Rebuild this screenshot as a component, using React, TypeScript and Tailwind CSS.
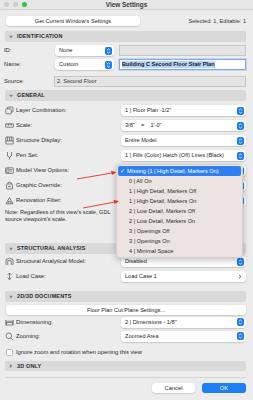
import React from "react";

const Stepper = () => (
  <div className="w-[7px] h-[8px] rounded-[2px] bg-[#1b7cf4] flex items-center justify-center shrink-0">
    <svg width="5" height="6" viewBox="0 0 5 6" fill="none">
      <path d="M1 2.2 L2.5 0.9 L4 2.2" stroke="white" strokeWidth="0.8" />
      <path d="M1 3.8 L2.5 5.1 L4 3.8" stroke="white" strokeWidth="0.8" />
    </svg>
  </div>
);

const Popup = ({ text, className = "", chevron = false }: { text: string; className?: string; chevron?: boolean }) => (
  <div
    className={`h-[11px] bg-white rounded-[3px] shadow-[0_0.5px_1.2px_rgba(0,0,0,0.28)] flex items-center justify-between pl-[4px] pr-[2px] ${className}`}
  >
    <span className="text-[5.6px] text-[#262626] whitespace-pre">{text}</span>
    {chevron ? (
      <svg width="4" height="5" viewBox="0 0 4 5" className="mr-[2px]">
        <path d="M1 0.7 L3 2.5 L1 4.3" stroke="#333" strokeWidth="0.8" fill="none" />
      </svg>
    ) : (
      <Stepper />
    )}
  </div>
);

const Header = ({ title, open = true, className = "" }: { title: string; open?: boolean; className?: string }) => (
  <div className={`h-[11px] bg-[#d9d9d9] rounded-[2px] flex items-center pl-[4px] gap-[4px] ${className}`}>
    <svg width="4" height="4" viewBox="0 0 4 4">
      {open ? <path d="M0 0.8 L4 0.8 L2 3.4 Z" fill="#8a8a8a" /> : <path d="M0.8 0 L3.4 2 L0.8 4 Z" fill="#8a8a8a" />}
    </svg>
    <span className="text-[5.4px] font-bold text-[#2a2a2a] tracking-[0.2px]">{title}</span>
  </div>
);

const Icon = ({ children }: { children: React.ReactNode }) => (
  <svg width="9" height="9" viewBox="0 0 9 9" fill="none" stroke="#555" strokeWidth="0.7" className="shrink-0">
    {children}
  </svg>
);

const Row = ({ icon, label, children, h = "h-[15px]" }: { icon: React.ReactNode; label: string; children?: React.ReactNode; h?: string }) => (
  <div className={`${h} flex items-center`}>
    <div className="w-[116px] flex items-center gap-[2px] shrink-0">
      {icon}
      <span className="text-[5.8px] text-[#2b2b2b] whitespace-nowrap">{label}</span>
    </div>
    <div className="flex-1">{children}</div>
  </div>
);

const items = [
  "0 | All On",
  "1 | High Detail, Markers Off",
  "1 | High Detail, Markers On",
  "2 | Low Detail, Markers Off",
  "2 | Low Detail, Markers On",
  "3 | Openings Off",
  "3 | Openings On",
  "4 | Minimal Space",
];

export default function App() {
  return (
    <div className="w-[253px] h-[400px] bg-[#ececec] relative overflow-hidden font-['Liberation_Sans',Arial,sans-serif]">
      {/* title bar */}
      <div className="h-[10px] bg-[#e6e6e6] border-b border-[#d2d2d2] relative flex items-center">
        <div className="flex items-center gap-[4px] pl-[4px]">
          <div className="w-[5px] h-[5px] rounded-full bg-[#cdcdcd]" />
          <div className="w-[5px] h-[5px] rounded-full bg-[#cdcdcd]" />
          <div className="w-[5px] h-[5px] rounded-full bg-[#2bc840]" />
        </div>
        <div className="absolute inset-0 flex items-center justify-center">
          <span className="text-[6.4px] font-bold text-[#3a3a3a]">View Settings</span>
        </div>
      </div>

      <div className="pl-[5px] pr-[7px] flex flex-col">
        {/* top row */}
        <div className="mt-[6px] h-[10px] flex items-center justify-between">
          <div className="ml-[1px] w-[134px] h-[10px] bg-white rounded-[3px] shadow-[0_0.5px_1.2px_rgba(0,0,0,0.25)] flex items-center justify-center">
            <span className="text-[5.6px] text-[#262626]">Get Current Window's Settings</span>
          </div>
          <span className="text-[5.6px] text-[#333]">Selected: 1, Editable: 1</span>
        </div>

        <Header title="IDENTIFICATION" className="mt-[5px]" />

        {/* ID */}
        <div className="mt-[3px] h-[11px] flex items-center">
          <span className="w-[51px] -ml-[1px] text-[5.8px] text-[#2b2b2b]">ID:</span>
          <Popup text="None" className="w-[59px]" />
          <div className="ml-[5px] flex-1 h-[11px] bg-[#e4e4e4] border border-[#c6c6c6]" />
        </div>
        {/* Name */}
        <div className="mt-[3px] h-[11px] flex items-center">
          <span className="w-[51px] -ml-[1px] text-[5.8px] text-[#2b2b2b]">Name:</span>
          <Popup text="Custom" className="w-[59px]" />
          <div className="ml-[5px] flex-1 h-[11px] bg-white border border-[#7fa9ec] shadow-[0_0_0_0.6px_#a9c6f3] flex items-center pl-[2px]">
            <span className="text-[5.6px] font-bold text-[#1a1a1a] bg-[#b4d4fb] leading-[7px] whitespace-nowrap">Building C Second Floor Stair Plan</span>
          </div>
        </div>
        {/* Source */}
        <div className="mt-[6px] h-[11px] flex items-center">
          <span className="w-[50px] -ml-[1px] text-[5.8px] text-[#2b2b2b]">Source:</span>
          <div className="flex-1 h-[11px] bg-[#e4e4e4] border border-[#c6c6c6] flex items-center pl-[2px]">
            <span className="text-[5.6px] text-[#333]">2. Second Floor</span>
          </div>
        </div>

        <Header title="GENERAL" className="mt-[3px]" />

        <div className="mt-[2px] flex flex-col">
          <Row
            label="Layer Combination:"
            icon={
              <Icon>
                <rect x="2.5" y="1" width="5.5" height="5" rx="0.6" />
                <rect x="0.8" y="2.8" width="5.5" height="5" rx="0.6" fill="#ececec" />
              </Icon>
            }
          >
            <Popup text={'1 | Floor Plan -1/2"'} />
          </Row>
          <Row
            label="Scale:"
            icon={
              <Icon>
                <rect x="0.5" y="2.8" width="8" height="3.4" rx="0.4" />
                <path d="M2 2.8 V4.2 M3.5 2.8 V4.6 M5 2.8 V4.2 M6.5 2.8 V4.6" />
              </Icon>
            }
          >
            <Popup text={'3/8"    =    1\'-0"'} />
          </Row>
          <Row
            label="Structure Display:"
            icon={
              <Icon>
                <rect x="0.8" y="1" width="7.4" height="7" rx="0.4" />
                <path d="M0.8 5 H8.2 M2.6 1 V5 M4.5 1 V5 M6.4 1 V5" />
              </Icon>
            }
          >
            <Popup text="Entire Model" />
          </Row>
          <Row
            label="Pen Set:"
            icon={
              <Icon>
                <path d="M2.5 1 V5 Q4.5 7.5 6.5 5 V1 M4.5 6.3 V8.5" />
              </Icon>
            }
          >
            <Popup text="1 | Fills (Color) Hatch (Off) Lines (Black)" />
          </Row>
          <Row
            label="Model View Options:"
            icon={
              <Icon>
                <rect x="0.6" y="1.8" width="7.8" height="5.6" rx="0.5" />
                <rect x="1.8" y="3" width="2.2" height="3.2" />
                <path d="M5 3.5 H7.2 M5 5 H7.2" />
              </Icon>
            }
          >
            <Popup text="" />
          </Row>
          <Row
            label="Graphic Override:"
            icon={
              <Icon>
                <rect x="1.5" y="3" width="6" height="5" rx="0.5" />
                <path d="M2.8 3 V1.8 Q4.5 0.4 6.2 1.8 V3" />
                <path d="M3 5.5 H6" />
              </Icon>
            }
          >
            <Popup text="" />
          </Row>
          <Row
            label="Renovation Filter:"
            icon={
              <Icon>
                <path d="M1 7.8 L4.5 1.5 L8 7.8 Z" />
                <path d="M3.2 7.8 V5.5 H5.8 V7.8" />
              </Icon>
            }
          >
            <Popup text="" />
          </Row>
        </div>

        <div className="mt-[1px] w-[110px] overflow-hidden text-[5.6px] leading-[7px] text-[#2b2b2b] whitespace-nowrap">
          <div>Note: Regardless of this view's scale, GDL</div>
          <div>source viewpoint's scale.</div>
        </div>

        <Header title="STRUCTURAL ANALYSIS" className="mt-[20px]" />
        <div className="flex flex-col">
          <Row
            label="Structural Analytical Model:"
            icon={
              <Icon>
                <path d="M1 8 V2.5 L4.5 1 L8 2.5 V8 M2.8 8 V3.5 H6.2 V8" />
              </Icon>
            }
          >
            <Popup text="Disabled" />
          </Row>
          <Row
            label="Load Case:"
            icon={
              <Icon>
                <path d="M4.5 1 V7 M2.8 5.5 L4.5 7.8 L6.2 5.5 M2.5 2.5 Q4.5 0.5 6.5 2.5" />
              </Icon>
            }
          >
            <Popup text="Load Case 1" chevron />
          </Row>
        </div>

        <Header title="2D/3D DOCUMENTS" className="mt-[7px]" />
        <div className="mt-[3px] ml-[1px] h-[10px] bg-white rounded-[3px] shadow-[0_0.5px_1.2px_rgba(0,0,0,0.25)] flex items-center justify-center">
          <span className="text-[5.6px] text-[#262626]">Floor Plan Cut Plane Settings...</span>
        </div>
        <div className="flex flex-col">
          <Row
            h="h-[14px]"
            label="Dimensioning:"
            icon={
              <Icon>
                <path d="M0.8 2 V7.5 M8.2 2 V7.5 M0.8 3.2 H8.2" />
                <rect x="1.6" y="4.4" width="5.8" height="2.6" />
              </Icon>
            }
          >
            <Popup text={'2 | Dimensions - 1/8"'} />
          </Row>
          <Row
            h="h-[14px]"
            label="Zooming:"
            icon={
              <Icon>
                <circle cx="3.8" cy="3.8" r="2.8" />
                <path d="M5.8 5.8 L8.2 8.2" />
              </Icon>
            }
          >
            <Popup text="Zoomed Area" />
          </Row>
        </div>

        <div className="mt-[4px] h-[10px] flex items-center gap-[3px]">
          <div className="ml-[1px] w-[7px] h-[7px] bg-white rounded-[1.5px] border border-[#bdbdbd]" />
          <span className="text-[5.8px] text-[#2b2b2b]">Ignore zoom and rotation when opening this view</span>
        </div>

        <Header title="3D ONLY" open={false} className="mt-[4px] !h-[10px]" />

        <div className="mt-[6px] h-px bg-[#d4d4d4]" />

        <div className="mt-[5px] h-[10px] flex justify-end gap-[7px]">
          <div className="w-[43px] h-[10px] bg-white rounded-[3px] shadow-[0_0.5px_1.2px_rgba(0,0,0,0.25)] flex items-center justify-center">
            <span className="text-[5.8px] text-[#262626]">Cancel</span>
          </div>
          <div className="w-[44px] h-[10px] bg-[#1d7ef6] rounded-[3px] flex items-center justify-center">
            <span className="text-[5.8px] text-white">OK</span>
          </div>
        </div>
      </div>

      {/* dropdown menu */}
      <div className="absolute left-[116px] top-[164px] w-[127px] h-[94px] bg-[#ece4e2] rounded-[4px] shadow-[0_2px_6px_rgba(0,0,0,0.25)] border border-[#d6cfcd] p-[1px]">
        <div className="h-[10px] bg-[#2f7ff0] rounded-[2px] flex items-center pl-[2px] gap-[2px]">
          <span className="text-[6px] text-white leading-none">✓</span>
          <span className="text-[5.6px] text-white whitespace-nowrap">Missing (1 | High Detail, Markers On)</span>
        </div>
        {items.map((t) => (
          <div key={t} className="h-[10px] flex items-center pl-[11px]">
            <span className="text-[5.6px] text-[#2b2b2b] whitespace-nowrap">{t}</span>
          </div>
        ))}
      </div>

      {/* red arrows */}
      <svg className="absolute left-0 top-0 pointer-events-none" width="253" height="400">
        <line x1="77" y1="179" x2="112" y2="173" stroke="#e63323" strokeWidth="0.9" />
        <path d="M116.5 172.2 L111 170.7 L112 175 Z" fill="#e63323" />
        <line x1="83" y1="208" x2="115" y2="202" stroke="#e63323" strokeWidth="0.9" />
        <path d="M119 201.2 L113.5 199.8 L114.5 204 Z" fill="#e63323" />
      </svg>
    </div>
  );
}
